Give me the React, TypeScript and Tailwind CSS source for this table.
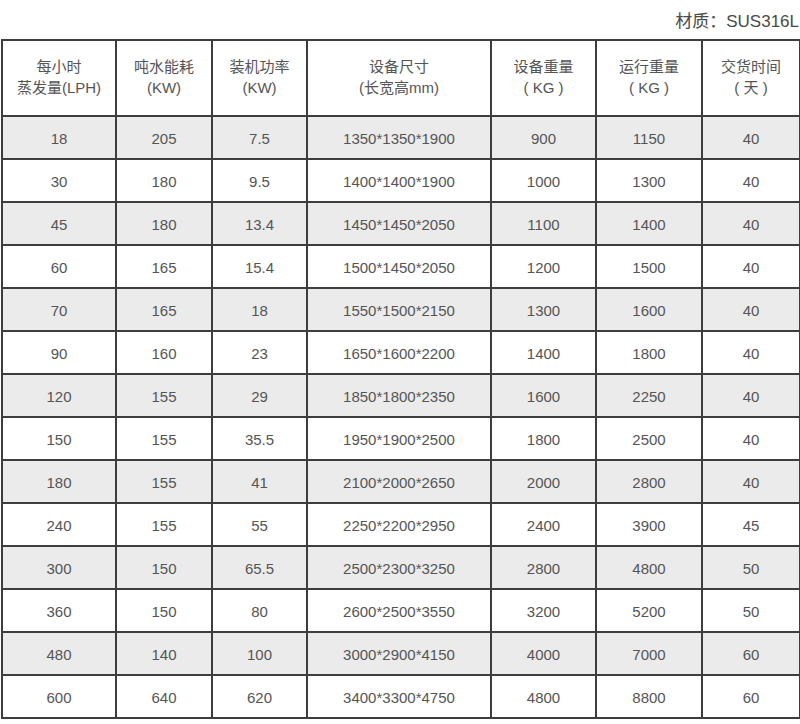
const HEADERS: [string, string][] = [
  ['每小时', '蒸发量(LPH)'],
  ['吨水能耗', '(KW)'],
  ['装机功率', '(KW)'],
  ['设备尺寸', '(长宽高mm)'],
  ['设备重量', '( KG )'],
  ['运行重量', '( KG )'],
  ['交货时间', '( 天 )'],
];

const WIDTHS = ['w-[114px]', 'w-[96px]', 'w-[95px]', 'w-[184px]', 'w-[105px]', 'w-[106px]', 'w-[98px]'];

const ROWS: string[][] = [
  ['18', '205', '7.5', '1350*1350*1900', '900', '1150', '40'],
  ['30', '180', '9.5', '1400*1400*1900', '1000', '1300', '40'],
  ['45', '180', '13.4', '1450*1450*2050', '1100', '1400', '40'],
  ['60', '165', '15.4', '1500*1450*2050', '1200', '1500', '40'],
  ['70', '165', '18', '1550*1500*2150', '1300', '1600', '40'],
  ['90', '160', '23', '1650*1600*2200', '1400', '1800', '40'],
  ['120', '155', '29', '1850*1800*2350', '1600', '2250', '40'],
  ['150', '155', '35.5', '1950*1900*2500', '1800', '2500', '40'],
  ['180', '155', '41', '2100*2000*2650', '2000', '2800', '40'],
  ['240', '155', '55', '2250*2200*2950', '2400', '3900', '45'],
  ['300', '150', '65.5', '2500*2300*3250', '2800', '4800', '50'],
  ['360', '150', '80', '2600*2500*3550', '3200', '5200', '50'],
  ['480', '140', '100', '3000*2900*4150', '4000', '7000', '60'],
  ['600', '640', '620', '3400*3300*4750', '4800', '8800', '60'],
];

export default function App() {
  return (
    <div className="w-[800px] h-[724px] bg-white text-[#555] font-['Liberation_Sans','Noto_Sans_CJK_SC',sans-serif] overflow-hidden">
      {/* material note */}
      <div className="h-[39px] flex items-start justify-end pt-[12px] pr-[1px]">
        <span className="text-[17px] leading-[20px] text-[#4a4a4a]">材质：SUS316L</span>
      </div>

      <table className="ml-[1px] w-[798px] table-fixed border-collapse text-[15px]">
        <colgroup>
          {WIDTHS.map((w, i) => (
            <col key={i} className={w} />
          ))}
        </colgroup>
        <thead>
          <tr className="h-[76px] bg-white">
            {HEADERS.map(([a, b]) => (
              <th key={a} className="border-2 border-[#3d3d3d] font-normal text-center align-middle leading-[21px] pb-[2px]">
                <div>{a}</div>
                <div>{b}</div>
              </th>
            ))}
          </tr>
        </thead>
        <tbody>
          {ROWS.map((row, ri) => (
            <tr key={ri} className={`h-[43px] ${ri % 2 === 0 ? 'bg-[#ebebeb]' : 'bg-white'}`}>
              {row.map((cell, ci) => (
                <td key={ci} className="border-2 border-[#3d3d3d] text-center align-middle leading-none pt-[1px]">
                  {cell}
                </td>
              ))}
            </tr>
          ))}
        </tbody>
      </table>
    </div>
  );
}
